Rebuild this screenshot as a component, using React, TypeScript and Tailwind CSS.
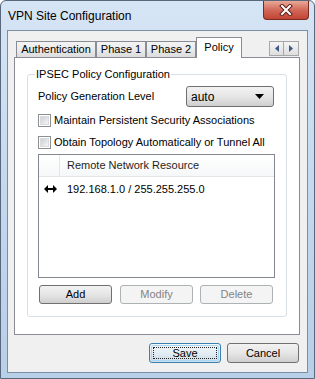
import React from 'react';

const font = { fontFamily: '"Liberation Sans", Arial, sans-serif' };

function Checkbox({ label, className = '' }: { label: string; className?: string }) {
  return (
    <div className={`flex items-center h-[13px] ${className}`}>
      <div className="w-[13px] h-[13px] border border-[#8e8f8f] bg-white p-[1px] shrink-0">
        <div className="w-full h-full bg-gradient-to-br from-[#cbcfd5] to-[#f6f6f6] border border-[#dadcdf]" />
      </div>
      <span className="ml-[3px] leading-[13px]">{label}</span>
    </div>
  );
}

function Button({
  children,
  disabled,
  isDefault,
  className = '',
}: {
  children: React.ReactNode;
  disabled?: boolean;
  isDefault?: boolean;
  className?: string;
}) {
  if (disabled) {
    return (
      <div
        className={`flex items-center justify-center rounded-[3px] border border-[#adb2b5] bg-[#f4f4f4] text-[#838383] ${className}`}
      >
        {children}
      </div>
    );
  }
  if (isDefault) {
    return (
      <div
        className={`rounded-[3px] border border-[#3c7fb1] p-[1px] bg-gradient-to-b from-[#f2f7fa] via-[#e4edf3] to-[#ccdde9] ${className}`}
      >
        <div className="w-full h-full rounded-[2px] border border-[#a9d8f5] flex items-center justify-center p-[1px]">
          <div className="w-full h-full border border-dotted border-[#222] flex items-center justify-center">
            {children}
          </div>
        </div>
      </div>
    );
  }
  return (
    <div
      className={`flex items-center justify-center rounded-[3px] border border-[#707070] bg-gradient-to-b from-[#f2f2f2] via-[#e6e6e6] to-[#cfcfcf] ${className}`}
    >
      {children}
    </div>
  );
}

function Tab({ label, className = '' }: { label: string; className?: string }) {
  return (
    <div
      className={`h-[16px] mb-[1px] border border-b-0 border-[#898c95] bg-gradient-to-b from-[#f3f3f3] via-[#ebebeb] to-[#dcdcdc] flex items-center justify-center leading-[13px] ${className}`}
    >
      {label}
    </div>
  );
}

export default function App() {
  return (
    <div
      className="w-[315px] h-[379px] flex flex-col border border-[#58677b] rounded-t-[6px] bg-gradient-to-b from-[#d6e5f5] via-[#c4d8ee] to-[#b8cfe8] text-black text-[11px]"
      style={font}
    >
      {/* title bar */}
      <div className="h-[29px] flex items-start justify-between shrink-0">
        <div className="ml-[7px] mt-[8px] text-[12px] leading-[14px] text-black">VPN Site Configuration</div>
        <div className="mr-[5px] w-[46px] h-[19px] rounded-b-[4px] border border-t-0 border-[#7a2a20] bg-gradient-to-b from-[#e9a997] via-[#d2685a] to-[#c14433] flex items-center justify-center">
          <svg width="14" height="12" viewBox="0 0 14 12">
            <path d="M3 2 L11 10 M11 2 L3 10" stroke="#5b1f18" strokeWidth="4" strokeLinecap="square" />
            <path d="M3 2 L11 10 M11 2 L3 10" stroke="#ffffff" strokeWidth="2" strokeLinecap="square" />
          </svg>
        </div>
      </div>

      {/* client area */}
      <div className="ml-[6px] w-[301px] h-[343px] border border-[#7c8ea6] bg-[#f0f0f0] flex flex-col shrink-0">
        {/* tabs */}
        <div className="mt-[6px] ml-[8px] mr-[8px] h-[21px] -mb-[1px] flex items-end relative z-10">
          <Tab label="Authentication" className="w-[80px]" />
          <Tab label="Phase 1" className="w-[50px]" />
          <Tab label="Phase 2" className="w-[50px]" />
          <div className="w-[46px] h-[21px] border border-b-0 border-[#898c95] bg-white flex items-start justify-center pt-[3px] leading-[13px]">
            Policy
          </div>
          <div className="ml-auto self-start mt-[4px] flex">
            <div className="w-[15px] h-[15px] border border-[#a7a7a7] bg-gradient-to-b from-[#f5f5f5] to-[#dedede] flex items-center justify-center">
              <svg width="4" height="7" viewBox="0 0 4 7">
                <path d="M4 0 L0 3.5 L4 7 Z" fill="#3f5a86" />
              </svg>
            </div>
            <div className="w-[15px] h-[15px] border border-l-0 border-[#a7a7a7] bg-gradient-to-b from-[#f5f5f5] to-[#dedede] flex items-center justify-center">
              <svg width="4" height="7" viewBox="0 0 4 7">
                <path d="M0 0 L4 3.5 L0 7 Z" fill="#3f5a86" />
              </svg>
            </div>
          </div>
        </div>

        {/* tab page */}
        <div className="ml-[6px] w-[286px] h-[278px] border border-[#898c95] bg-white flex flex-col">
          {/* group box */}
          <div className="ml-[12px] mt-[16px] w-[260px] h-[243px] border border-[#d5dfe5] rounded-[3px] relative flex flex-col">
            <div className="absolute left-[7px] -top-[7px] px-[1px] bg-white leading-[13px]">
              IPSEC Policy Configuration
            </div>

            <div className="mt-[11px] pl-[10px] flex items-center h-[21px]">
              <div className="w-[148px]">Policy Generation Level</div>
              <div className="w-[88px] h-[21px] rounded-[3px] border border-[#707070] bg-gradient-to-b from-[#f2f2f2] via-[#e6e6e6] to-[#cfcfcf] flex items-center justify-between pl-[4px] pr-[9px]">
                <span className="text-[12px]">auto</span>
                <svg width="9" height="5" viewBox="0 0 9 5">
                  <path d="M0 0 L9 0 L4.5 5 Z" fill="#000" />
                </svg>
              </div>
            </div>

            <Checkbox label="Maintain Persistent Security Associations" className="mt-[7px] ml-[10px]" />
            <Checkbox label="Obtain Topology Automatically or Tunnel All" className="mt-[9px] ml-[10px]" />

            {/* list view */}
            <div className="mt-[5px] ml-[10px] w-[237px] h-[124px] border border-[#828790] bg-white flex flex-col">
              <div className="h-[22px] flex border-b border-[#e5e5e5] bg-gradient-to-b from-white to-[#f6f7f8]">
                <div className="w-[21px] border-r border-[#e5e5e5]" />
                <div className="flex items-center pl-[7px] text-[#1e1e1e]">Remote Network Resource</div>
              </div>
              <div className="mt-[3px] h-[18px] flex items-center">
                <div className="w-[21px] flex justify-center pl-[1px]">
                  <svg width="13" height="8" viewBox="0 0 13 8">
                    <path d="M0 4 L4 0 L4 3 L9 3 L9 0 L13 4 L9 8 L9 5 L4 5 L4 8 Z" fill="#000" />
                  </svg>
                </div>
                <div className="pl-[7px]">192.168.1.0 / 255.255.255.0</div>
              </div>
            </div>

            <div className="mt-[7px] ml-[11px] flex">
              <Button className="w-[73px] h-[19px]">Add</Button>
              <Button disabled className="ml-[8px] w-[73px] h-[19px]">
                Modify
              </Button>
              <Button disabled className="ml-[7px] w-[73px] h-[19px]">
                Delete
              </Button>
            </div>
          </div>
        </div>

        {/* dialog buttons */}
        <div className="mt-[8px] mr-[8px] flex justify-end">
          <Button isDefault className="w-[72px] h-[20px]">
            Save
          </Button>
          <Button className="ml-[6px] w-[72px] h-[20px]">Cancel</Button>
        </div>
      </div>
    </div>
  );
}
